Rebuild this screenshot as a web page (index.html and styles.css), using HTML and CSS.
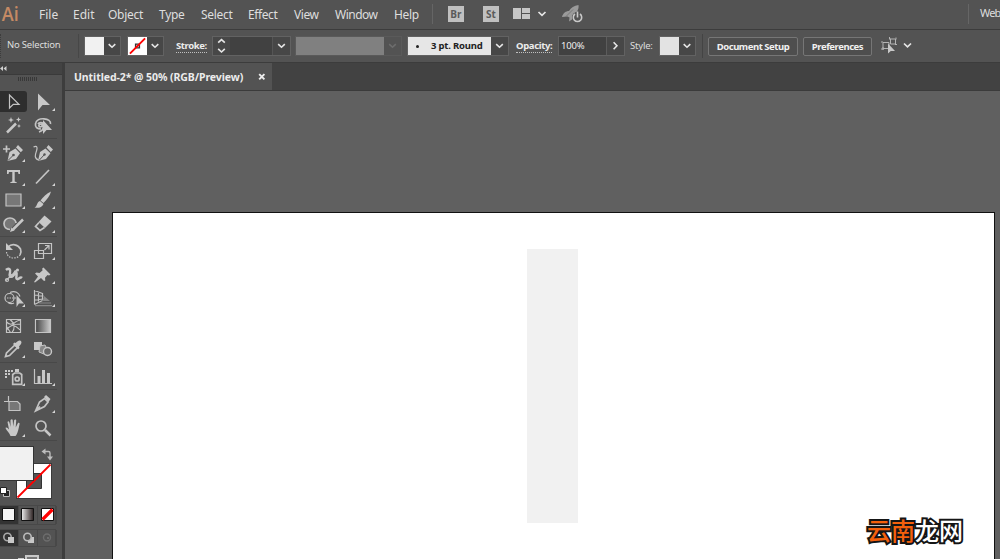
FILE: index.html
```html
<!DOCTYPE html>
<html lang="en">
<head>
    <meta charset="UTF-8">
    <meta name="viewport" content="width=device-width, initial-scale=1.0">
    <title>Untitled-2* @ 50% (RGB/Preview)</title>
    <link rel="stylesheet" href="styles.css">
</head>
<body>
    <header class="menubar">
        <div class="logo">Ai</div>
        <ul class="menu">
            <li class="m-file">File</li>
            <li class="m-edit">Edit</li>
            <li class="m-object">Object</li>
            <li class="m-type">Type</li>
            <li class="m-select">Select</li>
            <li class="m-effect">Effect</li>
            <li class="m-view">View</li>
            <li class="m-window">Window</li>
            <li class="m-help">Help</li>
        </ul>
        <span class="app-button">Br</span>
        <span class="app-button">St</span>
        <svg class="arrange" width="34" height="14" viewBox="0 0 34 14">
            <path fill="#c6c6c6" d="M0 1h8v11H0zM9 1h8v5H9zM9 7h8v5H9z"/>
            <path fill="none" stroke="#e6e6e6" stroke-width="1.7" d="M25.500 5l3.500 3.300L32.500 5"/>
        </svg>
        <svg class="gpu" width="22" height="18" viewBox="0 0 22 18">
            <path fill="#9a9a9a" d="M0 12c1-4 4-6 7-6 2-3 5-5.500 9.500-6 .5 3-.5 5-1.500 6.500l-4 3-1 5-3 2 .5-4-2-1z"/>
            <path stroke="#6a6a6a" stroke-width=".7" d="M4 11.500l7-7" fill="none"/>
            <circle cx="15.500" cy="12.300" r="5.500" fill="#535353"/>
            <path fill="none" stroke="#c8c8c8" stroke-width="1.600" d="M13 9a4.200 4.200 0 1 0 5 0M15.500 6.500v6"/>
        </svg>
        <div class="workspace">Web</div>
    </header>

    <div class="control">
        <div class="selection">No Selection</div>
        <div class="picker fill-picker">
            <span class="swatch"></span>
            <svg class="chev" viewBox="0 0 17 19"><path d="M5 7.500l3.500 3.300L12 7.500"/></svg>
        </div>
        <div class="picker stroke-picker">
            <svg class="swatch" viewBox="0 0 19 19">
                <path fill="none" stroke="#333" stroke-width="1.500" d="M7.500 7.500h4v4h-4z"/>
                <path stroke="#f00" stroke-width="2" d="M1.500 17.500l16-16"/>
            </svg>
            <svg class="chev" viewBox="0 0 17 19"><path d="M5 7.500l3.500 3.300L12 7.500"/></svg>
        </div>
        <div class="label stroke-label"><span class="dotted">Stroke:</span></div>
        <div class="picker weight">
            <svg class="spin" viewBox="0 0 17 19"><path d="M5 6l3.500-3.300L12 6M5 12.500l3.500 3.300 3.500-3.300"/></svg>
            <span class="value"></span>
            <svg class="chev" viewBox="0 0 17 19"><path d="M5 7.500l3.500 3.300L12 7.500"/></svg>
        </div>
        <div class="picker profile">
            <span class="value"></span>
            <svg class="chev off" viewBox="0 0 17 19"><path d="M5 7.500l3.500 3.300L12 7.500"/></svg>
        </div>
        <div class="picker brush">
            <span class="value"><i></i>3 pt. Round</span>
            <svg class="chev" viewBox="0 0 17 19"><path d="M5 7.500l3.500 3.300L12 7.500"/></svg>
        </div>
        <div class="label opacity-label"><span class="dotted">Opacity:</span></div>
        <div class="picker opacity">
            <span class="value">100%</span>
            <svg class="chev" viewBox="0 0 17 19"><path d="M6.500 5.500l3.500 3.700-3.500 3.700"/></svg>
        </div>
        <div class="label style-label">Style:</div>
        <div class="picker style-picker">
            <span class="swatch"></span>
            <svg class="chev" viewBox="0 0 17 19"><path d="M5 7.500l3.500 3.300L12 7.500"/></svg>
        </div>
        <div class="divider"></div>
        <button class="btn setup">Document Setup</button>
        <button class="btn prefs">Preferences</button>
        <svg class="similar" width="32" height="18" viewBox="0 0 32 18">
            <path fill="none" stroke="#b4b4b4" d="M2 5.500h6v6H2zM9.500 2h5v5h-5zM0 5h2M0 12h3M2 13v-3M8 2h2M15 .5v2M14 7.500h2M8.500 0v2"/>
            <path fill="#c8c8c8" d="M7 6.500v10l2.800-2.400h4.200z"/>
            <path fill="none" stroke="#e6e6e6" stroke-width="1.700" d="M23 6.500l3.500 3.300L30 6.500"/>
        </svg>
    </div>

    <main class="work">
        <aside class="tools">
            <div class="collapse">
                <svg width="8" height="7" viewBox="0 0 8 7"><path fill="#d0d0d0" d="M3 1v5L0 3.500zM6.500 1v5l-3-2.500z"/></svg>
            </div>
            <div class="grip"></div>

            <div class="group">
                <div class="tool selected">
                    <svg viewBox="0 0 30 24"><path class="line" d="M9.500 5v13l3.800-3.600h5.700z"/></svg>
                </div>
                <div class="tool more">
                    <svg viewBox="0 0 30 24"><path class="solid" d="M8 3.500v17l4.500-5.500h7.500z"/></svg>
                </div>
                <div class="tool">
                    <svg viewBox="0 0 30 24"><path class="thick" d="M7 18.500l9-9"/><path class="solid" d="M11 3l.8 2.200L14 6l-2.200.8L11 9l-.8-2.200L8 6l2.200-.8zM18.500 3l.7 1.800L21 5.500l-1.800.7-.7 1.800-.7-1.800-1.800-.7 1.800-.7zM19 10l.6 1.400 1.400.6-1.400.6L19 14l-.6-1.400L17 12l1.400-.6z"/></svg>
                </div>
                <div class="tool">
                    <svg viewBox="0 0 30 24"><path class="line bold" d="M11 15c-4 0-6-2-5.500-5C6 6 10 4.500 14 4.800s7 2.200 6.500 5.200M8 10c1-2 5-2 5 0s-3 4-4 2 3-3 4 0-1 5-4 6"/><path class="solid" d="M13 6v14l3.500-4H22z"/></svg>
                </div>
            </div>

            <div class="group">
                <div class="tool more">
                    <svg viewBox="0 0 30 24"><path class="line bold" d="M3 8h7M6.500 4.500v7"/><path class="solid" d="M7.500 20l2-9 6-3.500 4.500 4.800-4 5.700zM16 6.500l2-2.500 5 5-2.200 2.300z"/><path class="cut" d="M8 19.500l5.500-5.500"/><circle cx="13.500" cy="14" r="1.300" fill="#535353"/></svg>
                </div>
                <div class="tool">
                    <svg viewBox="0 0 30 24"><path class="solid" d="M8 20l2-9 5.500-3.500 5 4.800-4.500 5.700zM16.500 6.500l2-2.500 4.500 4.500-2.200 2.500z"/><path class="cut" d="M9 19.500l5.500-6"/><circle cx="14.500" cy="13.500" r="1.200" fill="#535353"/><path class="line" d="M3.500 6c4-2 4 1 3 4s-3 7 2 9"/></svg>
                </div>
                <div class="tool more">
                    <svg viewBox="0 0 30 24"><path class="solid" d="M7 5h13v4h-1.500L18 7h-3.300v9.500l2 .7V18h-6.400v-.8l2-.7V7H9l-.5 2H7z"/></svg>
                </div>
                <div class="tool more">
                    <svg viewBox="0 0 30 24"><path class="line bold" d="M6 18.500L19 5"/></svg>
                </div>
                <div class="tool more">
                    <svg viewBox="0 0 30 24"><path class="line filled" d="M6 6h15v12H6z"/></svg>
                </div>
                <div class="tool more">
                    <svg viewBox="0 0 30 24"><path class="solid" d="M21 3.500c-4.500 2-8 5.500-10.500 9l3 2.500c3-3 6.500-7 7.500-11.500zM10 13l3.500 3c-1.500 3.500-5.500 4.500-9 3.500 3-1 2-5.500 5.500-6.500z"/></svg>
                </div>
                <div class="tool more">
                    <svg viewBox="0 0 30 24"><path class="line bold filled" d="M10 17.500C6 17.500 4 14.500 4 11.500S6.500 6 10 6s6 2.500 6 5"/><path class="thick" d="M13 17.500l10-10"/><path class="solid" d="M10 20l1.500-4.500 3 3z"/></svg>
                </div>
                <div class="tool more">
                    <svg viewBox="0 0 30 24"><path class="solid" d="M14.500 3.500l7 6-6.500 6.500-6.500-6z"/><path class="line bold" d="M9 10.500l-3.500 4 4.500 4 4.500-3"/></svg>
                </div>
            </div>

            <div class="group">
                <div class="tool more">
                    <svg viewBox="0 0 30 24"><path class="line bold" d="M8 8c4-4 10-2.500 12.500 2 .8 2 .7 4-.5 6"/><path class="solid" d="M6 4v7h7z"/><path class="line" stroke-dasharray="1.500 1.200" d="M6.500 13c.5 4 3.500 6 7 6 2.500 0 5-1 6.500-3"/></svg>
                </div>
                <div class="tool more">
                    <svg viewBox="0 0 30 24"><path class="line" d="M8.500 4.500h13v10h-13zM4.500 11.500h9v8h-9z"/><path class="line" d="M14.500 11l4-4M15 6.500h4v4"/></svg>
                </div>
                <div class="tool more">
                    <svg viewBox="0 0 30 24"><path class="thick" d="M6 7c3-3 5 0 4 3s0 5 3 3 1-6 3-4-1 6 1 7 3-3 5-1"/><path class="line" d="M6 17.500L17 7"/><circle class="line" cx="7" cy="17" r="1.500"/><circle class="line" cx="11" cy="13" r="1.500"/><circle class="solid" cx="17.500" cy="7" r="1.500"/></svg>
                </div>
                <div class="tool more">
                    <svg viewBox="0 0 30 24"><path class="solid" d="M13.500 4.500l7 7-1.500 1-1.500-.5-2.500 2.800.3 2.700-1.300.5-3-3L5 19.500 4 19l4-5.500-3-3 1.500-1 3 .5L12.500 7.500l-.3-2z"/></svg>
                </div>
                <div class="tool more">
                    <svg viewBox="0 0 30 24"><circle class="line" cx="9.500" cy="12" r="4.500"/><path class="line" d="M10 6.500c5-2.500 9 .5 10 4M8 16.500c3 2 5 1 6 .5"/><path class="line" stroke-dasharray="1.500 1" d="M7 12h9"/><path class="solid" d="M16.500 9v12l2.500-3.500h5z"/></svg>
                </div>
                <div class="tool more">
                    <svg viewBox="0 0 30 24"><path class="line" d="M4.500 4v14.500M4.500 4.500l8 3M4.500 9l9 1M4.500 14l9-1M8.500 5.500v10M12.500 7v7M4.500 18.500l8-4"/><path fill="#888" d="M14 10l6 5h-7zM10 16.500h11v1H9zM5 19h17v1.200H5z"/></svg>
                </div>
            </div>

            <div class="group">
                <div class="tool">
                    <svg viewBox="0 0 30 24"><path class="line" d="M6.500 5.500h14v13h-14zM6.500 8c3 3 6 3 7 0M6.500 16c3-5 9-6 14-6M10 5.500c5 4 5 9 2 13M20.500 6c-5 1-7 3-8 6M14 12c3 0 4 3 6.500 4M6.500 12.500l4 6"/></svg>
                </div>
                <div class="tool">
                    <svg viewBox="0 0 30 24"><defs><linearGradient id="grad"><stop offset="0" stop-color="#444"/><stop offset="1" stop-color="#ccc"/></linearGradient></defs><path fill="url(#grad)" stroke="#c4c4c4" stroke-width="1.200" d="M5.500 5.500h15v13h-15z"/></svg>
                </div>
                <div class="tool more">
                    <svg viewBox="0 0 30 24"><path class="line bold" d="M15 8l2.500 2.500-8 8-4 1 1-3.500z"/><path class="solid" d="M13 7l1.500-1.500 1 .5L18 4c2-1.500 4.500.5 3 3l-2 2.500.5 1.500-1.500 1.500z"/></svg>
                </div>
                <div class="tool">
                    <svg viewBox="0 0 30 24"><path class="solid" d="M4 5h8v8H4z"/><path fill="#888" stroke="#c4c4c4" d="M10 9l5-1 2 4-3 5-5-2z"/><circle cx="17.500" cy="14.500" r="4" fill="#666" stroke="#c8c8c8" stroke-width="1.400"/></svg>
                </div>
            </div>

            <div class="group">
                <div class="tool more">
                    <svg viewBox="0 0 30 24"><path class="solid" d="M5 5h2v2H5zM8 5h2v2H8zM11 5h2v2h-2zM5 8h2v2H5zM8 8h2v2H8zM5 11h2v2H5zM15 4h4v3h-4z"/><path class="line bold" d="M12.700 9.500l2-1.500h5l2 1.500v9.800h-9z"/><circle class="line bold" cx="17.200" cy="14" r="2"/></svg>
                </div>
                <div class="tool more">
                    <svg viewBox="0 0 30 24"><path class="line" d="M4.500 4v14.500H22"/><path class="solid" d="M7.500 11h3v7h-3zM12 5h3v13h-3zM17 8h3v10h-3z"/></svg>
                </div>
            </div>

            <div class="group">
                <div class="tool">
                    <svg viewBox="0 0 30 24"><path class="line filled" d="M9 9.500h8.500l2.500 2.500v6.500H9z"/><path class="line" d="M8.500 4v5M4 9.500h5"/></svg>
                </div>
                <div class="tool more">
                    <svg viewBox="0 0 30 24"><path class="line bold" d="M5.500 19l4-9 5-3.500 3.500 3.500-3.500 4.500zM10 14.500l-3 3"/><path class="solid" d="M14 5l2-2 4.500 4-2 3z"/></svg>
                </div>
                <div class="tool more">
                    <svg viewBox="0 0 30 24"><path class="solid" d="M10.500 20c-1-3-4-5.500-5-8 1-1.200 2 0 3.500 1.500L7.500 6c1-1.500 2-.5 3 5V4c1-1.200 2-.8 2.200 0l.5 6.500 1-6.500c1-1 2-.5 2 .5l-.5 7 2.300-4.500c1-.7 2 .2 1.500 1.500-1 4-1.500 9-4 11.500z"/></svg>
                </div>
                <div class="tool">
                    <svg viewBox="0 0 30 24"><circle class="line bold" cx="11" cy="10" r="5"/><path class="thick" d="M15 14l5.500 5.500"/></svg>
                </div>
            </div>

            <!-- fill / stroke proxy -->
            <svg class="proxy" width="62" height="58" viewBox="0 0 62 58">
                <path fill="#3a3a3a" d="M16 20h36v36H16z"/>
                <path fill="#fff" d="M17 21h34v34H17z"/>
                <path fill="#535353" stroke="#333" d="M26.500 30.500h15v15h-15z"/>
                <path stroke="#f00" stroke-width="1.800" d="M17.500 54.500l33-33"/>
                <path fill="#333" d="M0 3h34v35H0z"/>
                <path fill="#f1f1f1" d="M0 4h33v33H0z"/>
                <path fill="none" stroke="#bdbdbd" stroke-width="1.400" d="M45 8.500h3.500q1.500 0 1.500 1.500v5"/>
                <path fill="#bdbdbd" d="M45.500 5.500v6l-4-3zM47 13.500h6L50 17.500z"/>
                <path fill="#222" stroke="#bbb" d="M3.500 47.500h6v6h-6z"/>
                <path fill="#fff" stroke="#222" d="M.5 44.500h6v6h-6z"/>
            </svg>

            <div class="modes">
                <span class="on"><svg viewBox="0 0 18 18"><path fill="#f4f4f4" stroke="#111" d="M2.500 2.500h12v12h-12z"/></svg></span>
                <span><svg viewBox="0 0 18 18"><defs><linearGradient id="grad2"><stop offset="0" stop-color="#eee"/><stop offset="1" stop-color="#2b2020"/></linearGradient></defs><path fill="url(#grad2)" stroke="#111" d="M2.500 2.500h12v12h-12z"/></svg></span>
                <span><svg viewBox="0 0 18 18"><path fill="#fff" stroke="#111" d="M3.500 2.500h12v12h-12z"/><path stroke="#f00" stroke-width="3.200" d="M4.500 13.500l10-10"/></svg></span>
            </div>
            <div class="modes draw">
                <span class="on"><svg viewBox="0 0 18 16"><circle cx="7.500" cy="7" r="3.700" fill="none" stroke="#aaa" stroke-width="1.600"/><path fill="#c8c8c8" d="M8 7h6v6H8z"/></svg></span>
                <span><svg viewBox="0 0 18 16"><path fill="#c8c8c8" d="M9 7h6v6H9z"/><circle cx="8.500" cy="7" r="3.700" fill="#535353" stroke="#bbb" stroke-width="1.600"/></svg></span>
                <span><svg viewBox="0 0 18 16"><circle cx="9" cy="7.500" r="3.500" fill="none" stroke="#6d6d6d" stroke-width="1.400"/><path fill="#6d6d6d" d="M9 7h2v2H9z"/></svg></span>
            </div>
            <svg class="screen" width="62" height="8" viewBox="0 0 62 8"><path fill="#c8c8c8" d="M25 0h14v8H25zM18 3h6v4h-6z"/><path fill="#777" d="M27 2h10v6H27z"/></svg>
        </aside>

        <section class="document">
            <div class="tabs">
                <div class="tab">
                    <span class="tab-title">Untitled-2* @ 50% (RGB/Preview)</span>
                    <svg width="8" height="8" viewBox="0 0 8 8"><path stroke="#eee" stroke-width="1.900" d="M1.200 1.200l5.200 5.200M6.400 1.200L1.200 6.400"/></svg>
                </div>
            </div>
            <div class="canvas">
                <div class="artboard">
                    <div class="shape"></div>
                </div>
                <div class="watermark"><b>云南</b>龙网</div>
            </div>
        </section>
    </main>
</body>
</html>
```
FILE: styles.css
```css
* {
  box-sizing: border-box;
}

body {
  margin: 0;
  height: 559px;
  overflow: hidden;
  display: flex;
  flex-direction: column;
  background-color: #535353;
  color: #dedede;
  font-family: "Noto Sans", "Open Sans", sans-serif;
  font-size: 12px;
}

svg {
  display: block;
  flex: none;
}

/* Menu bar */
.menubar {
  display: flex;
  align-items: center;
  flex: none;
  height: 30px;
  padding-bottom: 1px;
  border-bottom: 1px solid #3c3c3c;
}

.logo {
  width: 39px;
  padding-left: 2px;
  color: #c58a64;
  font: 600 20px/26px "Open Sans", sans-serif;
  transform: scaleX(.9);
  transform-origin: left;
}

.menu {
  display: flex;
  width: 394px;
  height: 20px;
  margin: 0;
  padding: 0;
  list-style-type: none;
  line-height: 21px;
  border-right: 1px solid #656565;
  white-space: nowrap;
}

.m-file { width: 34px; }
.m-edit { width: 35px; }
.m-object { width: 51px; letter-spacing: -.3px; }
.m-type { width: 42px; letter-spacing: -.3px; }
.m-select { width: 47px; letter-spacing: -.3px; }
.m-effect { width: 46px; letter-spacing: -.4px; }
.m-view { width: 41px; letter-spacing: -.4px; }
.m-window { width: 59px; letter-spacing: -.5px; }
.m-help { letter-spacing: -.3px; }

.app-button {
  width: 16px;
  height: 16px;
  margin-left: 15px;
  margin-right: 4px;
  background-color: #c0c0c0;
  color: #5a5a5a;
  font: bold 10px/16px "Open Sans", sans-serif;
  text-align: center;
}

.arrange {
  margin-left: 10px;
}

.gpu {
  margin-left: 15px;
}

.workspace {
  height: 20px;
  margin-left: auto;
  padding-left: 11px;
  width: 32px;
  border-left: 1px solid #666;
  font-size: 11px;
  letter-spacing: -.8px;
  line-height: 18px;
}

/* Control bar */
.control {
  display: flex;
  align-items: center;
  flex: none;
  height: 33px;
  border-bottom: 1px solid #3c3c3c;
  font-size: 9.5px;
  letter-spacing: -.2px;
  white-space: nowrap;
}

.selection {
  width: 79px;
  height: 24px;
  padding-left: 6px;
  line-height: 22px;
  border-left: 1px dotted #3c3c3c;
  border-right: 1px solid #474747;
}

.picker {
  display: flex;
  height: 20px;
  border: 1px solid #626262;
  background-color: #474747;
}

.picker .value {
  flex: 1;
  line-height: 18px;
}

.chev,
.spin {
  width: 17px;
  height: 18px;
  fill: none;
  stroke: #e6e6e6;
  stroke-width: 1.7;
}

.chev.off {
  stroke: #6d6d6d;
}

.swatch {
  width: 19px;
  height: 18px;
  background-color: #f1f1f1;
}

.swatch + .chev {
  width: 16px;
}

.fill-picker { margin-left: 5px; }
.stroke-picker { margin-left: 6px; }
.stroke-picker .swatch { background-color: #fff; }

.label {
  height: 20px;
  line-height: 20px;
}

.dotted {
  display: inline-block;
  height: 17px;
  font-weight: bold;
  color: #ececec;
  border-bottom: 1px dotted #c0c0c0;
}

.stroke-label { width: 36px; margin-left: 12px; letter-spacing: -.4px; }
.weight { width: 79px; }
.weight .value { background-color: #414141; border-right: 1px solid #555; }
.profile { width: 107px; margin-left: 4px; border-color: #5a5a5a; background-color: #535353; }
.profile .value { background-color: #808080; }
.brush { width: 102px; margin-left: 5px; }
.brush .value { display: flex; align-items: center; background-color: #e6e6e6; color: #222; font-weight: bold; letter-spacing: -.2px; }
.brush i { width: 3px; height: 3px; margin: 0 12px 0 8px; border-radius: 50%; background-color: #222; }
.opacity-label { width: 42px; margin-left: 7px; letter-spacing: -.35px; }
.opacity { width: 67px; }
.opacity .value { padding-left: 2px; background-color: #414141; border-right: 1px solid #5c5c5c; color: #eee; }
.style-label { width: 29px; margin-left: 5px; }
.style-picker .swatch { background-color: #e3e3e3; }

.divider {
  width: 1px;
  height: 24px;
  margin: 0 5px 0 6px;
  background-color: #444;
}

.btn {
  height: 19px;
  padding: 0;
  border: 1px solid #767676;
  border-radius: 2px;
  background-color: #4e4e4e;
  color: #f0f0f0;
  font: bold 9.5px/17px "Noto Sans", sans-serif;
  letter-spacing: -.45px;
}

.setup { width: 90px; }
.prefs { width: 69px; margin-left: 5px; }
.similar { margin-left: 9px; }

/* Toolbox */
.work {
  display: flex;
  flex: 1;
  min-height: 0;
}

.tools {
  display: flex;
  flex-direction: column;
  width: 65px;
  flex: none;
  border-right: 3px solid #3d3d3d;
  overflow: hidden;
}

.collapse {
  flex: none;
  height: 12px;
  padding-top: 2px;
  background-color: #434343;
  border-bottom: 1px solid #3a3a3a;
}

.grip {
  flex: none;
  width: 19px;
  height: 4px;
  margin: 2px 0 9px 18px;
  background: repeating-linear-gradient(90deg, #383838 0 1px, #535353 1px 2px);
}

.group {
  display: grid;
  grid-template-columns: 30px 30px;
  flex: none;
  width: 57px;
  margin-bottom: 2px;
  padding-bottom: 1px;
  border-bottom: 1px solid #484848;
}

.tool {
  position: relative;
  width: 30px;
  height: 23.5px;
}

.tool svg {
  width: 30px;
  height: 24px;
}

.tool.selected {
  width: 27px;
  height: 21px;
  margin-top: 1px;
  border-radius: 0 3px 3px 0;
  background-color: #2e2e2e;
}

.selected svg {
  margin-top: -1px;
}

.tool.more::after {
  content: "";
  position: absolute;
  left: 22px;
  top: 18px;
  border-left: 3px solid transparent;
  border-bottom: 3px solid #d5d5d5;
}

.line {
  fill: none;
  stroke: #c4c4c4;
  stroke-width: 1.2;
}

.bold { stroke-width: 1.7; }
.filled { fill: #777; }
.thick { fill: none; stroke: #c8c8c8; stroke-width: 2.5; }
.solid { fill: #c8c8c8; }
.cut { stroke: #535353; stroke-width: 1; }

.modes {
  display: flex;
  flex: none;
  width: 56px;
  height: 20px;
  margin-top: 4px;
  border: 1px solid #484848;
  border-left: 0;
}

.modes span {
  flex: 1;
  border-right: 1px solid #484848;
}

.modes svg { width: 18px; height: 18px; }
.modes .on { background-color: #333; }
.draw { height: 18px; }
.draw svg { height: 16px; }
.screen { margin-top: 8px; }

/* Document */
.document {
  display: flex;
  flex-direction: column;
  flex: 1;
}

.tabs {
  display: flex;
  flex: none;
  height: 28px;
  background-color: #424242;
  border-bottom: 1px solid #3b3b3b;
}

.tab {
  display: flex;
  align-items: center;
  width: 207px;
  padding-left: 9px;
  background-color: #535353;
}

.tab-title {
  width: 184px;
  color: #ececec;
  font-size: 10.5px;
  font-weight: bold;
  letter-spacing: -.07px;
  white-space: nowrap;
}

.canvas {
  position: relative;
  flex: 1;
  padding: 121px 5px 0 47px;
  background-color: #606060;
  overflow: hidden;
}

.artboard {
  height: 500px;
  padding: 36px 0 0 414px;
  border: 1px solid #111;
  background-color: #fff;
}

.shape {
  width: 51px;
  height: 274px;
  background-color: #f1f1f1;
}

.watermark {
  position: absolute;
  right: 37px;
  bottom: 11px;
  color: #fff;
  font: 500 24px/36px "Noto Sans CJK SC", sans-serif;
  -webkit-text-stroke: 4px #151515;
  paint-order: stroke fill;
}

.watermark b {
  color: #f4600c;
  font-weight: 500;
}
```
